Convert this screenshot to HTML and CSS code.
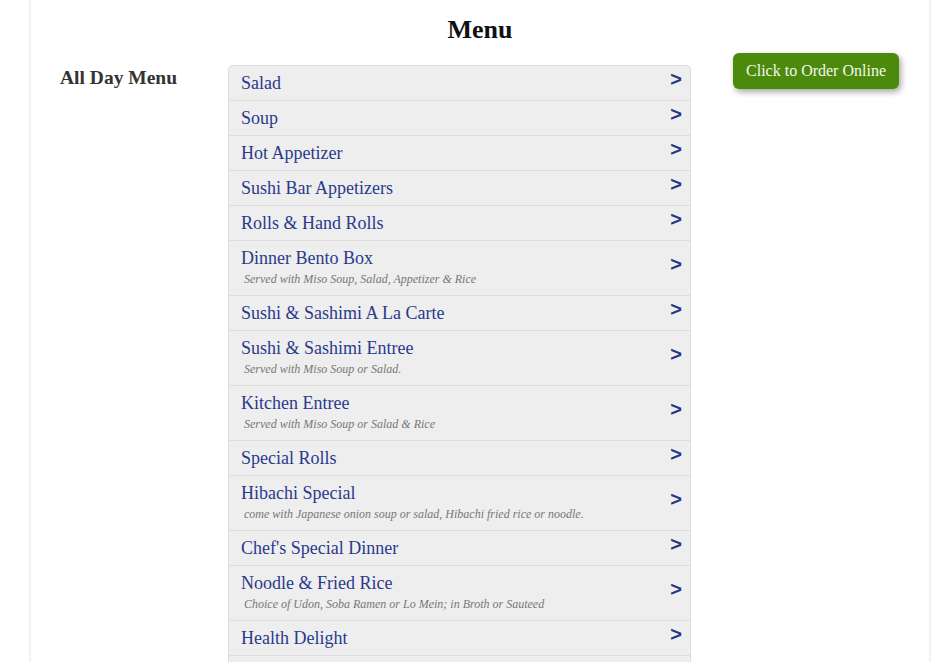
FILE: index.html
```html
<!doctype html>
<html>
<head>
  <title>Menu</title>
  <link rel="stylesheet" href="styles.css">
</head>
<body>
  <div class="page">
    <h1>Menu</h1>
    <div class="menu-layout">
      <h2 class="menu-name">All Day Menu</h2>
      <ul class="categories">
        <li><a href="#"><span class="cat"><span class="cat-title">Salad</span></span><span class="arrow">&gt;</span></a></li>
        <li><a href="#"><span class="cat"><span class="cat-title">Soup</span></span><span class="arrow">&gt;</span></a></li>
        <li><a href="#"><span class="cat"><span class="cat-title">Hot Appetizer</span></span><span class="arrow">&gt;</span></a></li>
        <li><a href="#"><span class="cat"><span class="cat-title">Sushi Bar Appetizers</span></span><span class="arrow">&gt;</span></a></li>
        <li><a href="#"><span class="cat"><span class="cat-title">Rolls &amp; Hand Rolls</span></span><span class="arrow">&gt;</span></a></li>
        <li><a href="#"><span class="cat"><span class="cat-title">Dinner Bento Box</span><span class="cat-note">Served with Miso Soup, Salad, Appetizer &amp; Rice</span></span><span class="arrow">&gt;</span></a></li>
        <li><a href="#"><span class="cat"><span class="cat-title">Sushi &amp; Sashimi A La Carte</span></span><span class="arrow">&gt;</span></a></li>
        <li><a href="#"><span class="cat"><span class="cat-title">Sushi &amp; Sashimi Entree</span><span class="cat-note">Served with Miso Soup or Salad.</span></span><span class="arrow">&gt;</span></a></li>
        <li><a href="#"><span class="cat"><span class="cat-title">Kitchen Entree</span><span class="cat-note">Served with Miso Soup or Salad &amp; Rice</span></span><span class="arrow">&gt;</span></a></li>
        <li><a href="#"><span class="cat"><span class="cat-title">Special Rolls</span></span><span class="arrow">&gt;</span></a></li>
        <li><a href="#"><span class="cat"><span class="cat-title">Hibachi Special</span><span class="cat-note">come with Japanese onion soup or salad, Hibachi fried rice or noodle.</span></span><span class="arrow">&gt;</span></a></li>
        <li><a href="#"><span class="cat"><span class="cat-title">Chef's Special Dinner</span></span><span class="arrow">&gt;</span></a></li>
        <li><a href="#"><span class="cat"><span class="cat-title">Noodle &amp; Fried Rice</span><span class="cat-note">Choice of Udon, Soba Ramen or Lo Mein; in Broth or Sauteed</span></span><span class="arrow">&gt;</span></a></li>
        <li><a href="#"><span class="cat"><span class="cat-title">Health Delight</span></span><span class="arrow">&gt;</span></a></li>
        <li><a href="#"><span class="cat"><span class="cat-title">Side Orders</span></span><span class="arrow">&gt;</span></a></li>
      </ul>
      <div class="order">
        <a class="order-btn" href="#">Click to Order Online</a>
      </div>
    </div>
  </div>
</body>
</html>
```

FILE: styles.css
```css
body {
  margin: 0;
  font-family: "Liberation Serif", "Times New Roman", serif;
  color: #333;
  background: #fff;
}
.page {
  width: 898px;
  min-height: 700px;
  margin-left: 29px;
  padding-top: 15px;
  border-left: 2px solid #f2f2f2;
  border-right: 2px solid #f2f2f2;
}
h1 {
  margin: 0;
  font-size: 26px;
  line-height: 30px;
  text-align: center;
  color: #111;
}

.menu-layout {
  display: grid;
  grid-template-columns: 168px 463px 208px;
  align-items: start;
  margin-top: 20px;
  padding-left: 29px;
}
.menu-name {
  margin: 2px 0 0;
  font-size: 19.5px;
  line-height: 22px;
  color: #333;
}

.categories {
  list-style: none;
  margin: 0;
  padding: 0;
  border: 1px solid #ddd;
  border-bottom: 0;
  border-radius: 5px 5px 0 0;
  background: #eee;
  overflow: hidden;
}
.categories li { border-bottom: 1px solid #ddd; }
.categories a {
  display: flex;
  align-items: center;
  padding: 7px 8px 7px 12px;
  color: #2a3a8c;
  text-decoration: none;
}
.cat { flex: 1; display: flex; flex-direction: column; }
.cat-title { font-size: 18px; line-height: 20px; }
.cat-note {
  margin: 4px 0 2px;
  padding-left: 3px;
  font-size: 12px;
  line-height: 14px;
  font-style: italic;
  color: #777;
}
.arrow {
  transform: translateY(-4px);
  font-family: "Liberation Sans", Arial, sans-serif;
  font-weight: bold;
  font-size: 20px;
  line-height: 20px;
  color: #263685;
}

.order { margin: -12px 0 0 42px; }
.order-btn {
  display: block;
  height: 36px;
  line-height: 36px;
  padding: 0 12px;
  border-radius: 6px;
  background: #4b8a0b;
  color: #f6f6f0;
  font-size: 16px;
  text-align: center;
  text-decoration: none;
  box-shadow: 2px 3px 6px rgba(0, 0, 0, .35);
}
```
